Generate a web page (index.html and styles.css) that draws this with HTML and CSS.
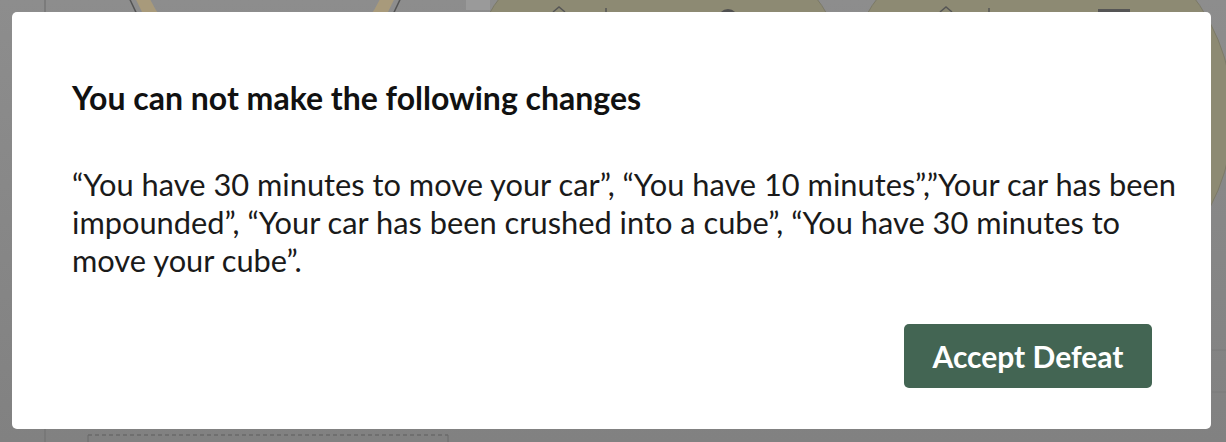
FILE: index.html
```html
<!DOCTYPE html>
<html lang="en">
<head>
<meta charset="utf-8">
<title>Changes not allowed</title>
<link rel="stylesheet" href="styles.css">
</head>
<body>
<div class="page">
  <svg class="page-art" width="1226" height="442" viewBox="0 0 1226 442" aria-hidden="true">
    <line x1="45" y1="0" x2="45" y2="442" stroke="#767676" stroke-width="1.5"/>
    <circle cx="265" cy="-56" r="146" fill="none" stroke="#545454" stroke-width="1.5"/>
    <circle cx="265" cy="-56" r="134" fill="none" stroke="#a89a7b" stroke-width="13"/>
    <rect x="466" y="0" width="24" height="10" fill="#9a9a9a"/>
    <circle cx="658" cy="115" r="197" fill="#8d8a73" stroke="#7c7a68" stroke-width="1"/>
    <circle cx="1036" cy="115" r="197" fill="#8d8a73" stroke="#7c7a68" stroke-width="1"/>
    <path d="M553 12 L559 7 L565 12" fill="none" stroke="#555" stroke-width="1.5"/>
    <line x1="606" y1="8" x2="606" y2="12" stroke="#555" stroke-width="1.5"/>
    <circle cx="728" cy="19" r="10" fill="#505050"/>
    <path d="M940 12 L946 7 L952 12" fill="none" stroke="#555" stroke-width="1.5"/>
    <line x1="989" y1="8" x2="989" y2="12" stroke="#555" stroke-width="1.5"/>
    <rect x="1098" y="9" width="32" height="6" fill="#555"/>
    <line x1="1212" y1="350" x2="1226" y2="350" stroke="#7a7a7a"/>
    <line x1="1212" y1="392" x2="1226" y2="392" stroke="#7a7a7a"/>
    <line x1="88" y1="435" x2="448" y2="435" stroke="#6a6a6a" stroke-width="1.5" stroke-dasharray="4 3"/>
    <line x1="88" y1="435" x2="88" y2="442" stroke="#6a6a6a"/>
    <line x1="448" y1="435" x2="448" y2="442" stroke="#6a6a6a"/>
  </svg>
</div>
<div class="modal" role="dialog" aria-labelledby="modal-title">
  <h2 id="modal-title" class="modal-title">You can not make the following changes</h2>
  <p class="modal-body">“You have 30 minutes to move your car”, “You have 10 minutes”,”Your car has been impounded”, “Your car has been crushed into a cube”, “You have 30 minutes to move your cube”.</p>
  <div class="modal-footer">
    <button class="btn-primary" type="button">Accept Defeat</button>
  </div>
</div>
</body>
</html>
```

FILE: styles.css
```css
html, body {
  margin: 0;
  padding: 0;
  width: 1226px;
  height: 442px;
  overflow: hidden;
}

body {
  font-family: Lato, "Noto Sans", sans-serif;
  background: #858585;
}

.page {
  width: 1226px;
  height: 442px;
  background: linear-gradient(180deg, #8d8d8d 0%, #818181 100%);
}

.page-art {
  display: block;
}

.modal {
  position: fixed;
  left: 12px;
  top: 12px;
  width: 1199px;
  height: 417px;
  box-sizing: border-box;
  background: #ffffff;
  border-radius: 5px;
  padding: 70px 59px 41px 60px;
  display: flex;
  flex-direction: column;
}

.modal-title {
  margin: 0;
  font-size: 32px;
  line-height: 32px;
  font-weight: 700;
  color: #111111;
}

.modal-body {
  margin: 52px -32px 0 0;
  font-size: 30.8px;
  line-height: 38px;
  font-weight: 400;
  color: #1a1a1a;
}

.modal-footer {
  margin-top: auto;
  display: flex;
  justify-content: flex-end;
}

.btn-primary {
  width: 248px;
  height: 64px;
  border: none;
  border-radius: 5px;
  background: #436553;
  color: #ffffff;
  font-family: Lato, "Noto Sans", sans-serif;
  font-size: 30px;
  font-weight: 700;
  padding: 0;
  cursor: pointer;
}
```
